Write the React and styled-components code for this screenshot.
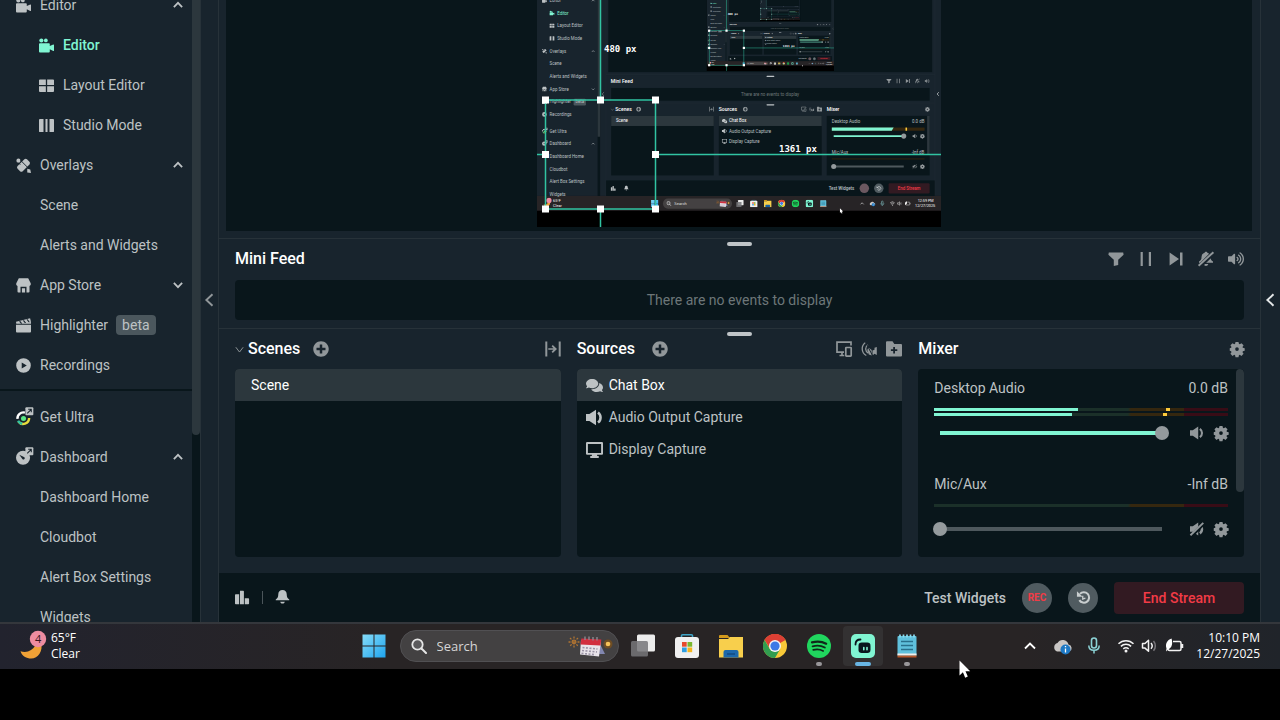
import React, { useState } from "react";
import styled, { createGlobalStyle } from "styled-components";
import { FaComments, FaPlusCircle, FaVolumeUp } from "react-icons/fa";

const colors = {
  section: "#18242d",
  dark: "#09161b",
  border: "#273239",
  selected: "#2c373d",
  text: "#bdc2c4",
  title: "#ffffff",
  icon: "#91979a",
  teal: "#80f5d2",
  red: "#f23b46",
};

const GlobalStyle = createGlobalStyle`
  * {
    box-sizing: border-box;
  }
  body {
    margin: 0;
    background: #000;
    color: ${colors.text};
    font: 14px/20px Roboto, "Liberation Sans", sans-serif;
    overflow: hidden;
  }
  button {
    font: inherit;
    color: inherit;
    background: none;
    border: 0;
    padding: 0;
  }
  svg {
    display: block;
    flex: none;
  }
  ul {
    list-style: none;
    margin: 0;
    padding: 0;
  }
`;

/* ---------- icons ---------- */

const glyphs = {
  camera: (
    <>
      <circle cx="2.500" cy="2.600" r="2.200" />
      <circle cx="7.300" cy="2.600" r="2" />
      <path d="M1 5.500h9.500a1 1 0 0 1 1 1v2L15.200 7a.6.600 0 0 1 .8.500v5.800a.6.600 0 0 1-.8.500L11.500 12v2.500a1 1 0 0 1-1 1H1a1 1 0 0 1-1-1v-8a1 1 0 0 1 1-1z" />
    </>
  ),
  grid: (
    <path d="M1 1.500h6.300v6H0v-5a1 1 0 0 1 1-1zM8.700 1.500H15a1 1 0 0 1 1 1v5H8.700zM0 8.800h7.300v6H1a1 1 0 0 1-1-1zM8.700 8.800H16v5a1 1 0 0 1-1 1H8.700z" />
  ),
  columns: (
    <path d="M1 1h3.800v14H1a1 1 0 0 1-1-1V2a1 1 0 0 1 1-1zM6.900 1h2.200v14H6.900zM11.200 1H15a1 1 0 0 1 1 1v12a1 1 0 0 1-1 1h-3.800z" />
  ),
  overlays: (
    <>
      <path d="M8.900 1.400a2 2 0 0 1 2.800 0l2.600 2.600a2 2 0 0 1 0 2.800l-7.200 7.200a2 2 0 0 1-2.800 0l-2.600-2.600a2 2 0 0 1 0-2.800z" />
      <circle cx="2.600" cy="2.800" r="2.200" />
      <path d="M5 2.600l8.500 8.500M2.500 5.100l2 2" stroke={colors.section} strokeWidth="1" />
      <path d="M12 11.400l3.200.8.800 3.800-4-.6z" />
    </>
  ),
  store: (
    <path
      fillRule="evenodd"
      d="M3 .3h10l2.700 5.200c.4 1.500-.3 2.600-1.300 2.900v6.100a1 1 0 0 1-1 1H2.600a1 1 0 0 1-1-1V8.400C.6 8.100-.1 7 .3 5.500zM4.800 15.500h1.500v-4.500h3.400v4.500h1.500V9.300H4.800z"
    />
  ),
  clapper: (
    <path
      fillRule="evenodd"
      d="M0 7.200h16v7.300a1 1 0 0 1-1 1H1a1 1 0 0 1-1-1zM0 3.900 15 .2l.8 3L16 6H.3zM3.200 3.600l2 2.200h1.400l-2-2.500zM7.200 2.600l2.200 2.800 1.400-.1-2.200-3zM11.200 1.600l2.200 3 1.300-.2-2.100-3.100z"
    />
  ),
  play: (
    <path
      fillRule="evenodd"
      d="M8 .2a7.800 7.800 0 1 1 0 15.600A7.800 7.800 0 0 1 8 .2zM6.100 4.800v6.400L11.500 8z"
    />
  ),
  ultra: (
    <>
      <g fill="none" strokeWidth="2.600">
        <path d="M1.600 9.500A6.300 6.300 0 0 1 9.500 2.800" stroke="#fff" />
        <path d="M14 8.500A6.300 6.300 0 0 1 2.600 12.200" stroke="#e6dc3c" />
        <path d="M2.200 11.400a6.300 6.300 0 0 0 4.500 3.300" stroke="#31c3a2" />
      </g>
      <circle cx="8" cy="9" r="2.700" fill="#58e684" />
      <Popout />
    </>
  ),
  dashboard: (
    <>
      <circle cx="7.500" cy="8.200" r="7.500" />
      <path d="M3.500 5l5.500 2.600a1.500 1.500 0 0 1-2 2.200z" fill={colors.section} />
      <Popout />
    </>
  ),
  filter: <path d="M.8 1.500h14.400l.4 2.200-5.400 5V14l-4.400 1V8.700l-5.400-5z" />,
  pause: <path d="M2.600 1h2.200v14H2.600zM10.800 1H13v14h-2.200z" />,
  skip: <path d="M1.600 1.500 11 8l-9.400 6.500zM12 1.500h2.500v13H12z" />,
  bellOff: (
    <>
      <path d="M8 .8c.8 0 1.300.4 1.300 1 2.100.6 3.200 2.200 3.200 4.400 0 2.200.8 3 2.500 4.300v1.300H1v-1.300c1.700-1.300 2.500-2.100 2.500-4.300 0-2.200 1.100-3.800 3.200-4.400 0-.6.500-1 1.300-1zM5.700 13h4.600c-.3 1.300-1.200 2-2.300 2s-2-.7-2.300-2z" />
      <path d="M1 16 16 1" stroke={colors.section} strokeWidth="4.400" />
      <path d="M.6 14.800 15.400 1.200" stroke="currentColor" strokeWidth="1.900" />
    </>
  ),
  gear: (
    <path
      fillRule="evenodd"
      d="M6.300 0h3.400l.5 2.100 1 .4 1.900-1.100 2.400 2.400-1.200 1.900.4 1 2.100.5v2.900l-2.100.5-.4 1 1.200 1.900-2.400 2.400-1.900-1.200-1 .4-.5 2.200H6.300l-.5-2.200-1-.4-1.900 1.200-2.400-2.400 1.200-1.900-.4-1L-.3 10V7.200l1.600-.5.4-1L.5 3.800l2.400-2.400 1.900 1.100 1-.4zM8 6a2.100 2.100 0 1 0 0 4.200A2.100 2.100 0 0 0 8 6z"
    />
  ),
  dock: (
    <path d="M.3.500h2v15h-2zM13.700.500h2v15h-2zM3.300 7.200h5.200L6.600 5.300l1.200-1.200L12 8l-4.200 4-1.200-1.200 1.900-2H3.300z" />
  ),
  devices: (
    <g fill="none" stroke="currentColor" strokeWidth="1.700">
      <path d="M15 4.500V1.200H1v10h7M3.500 14.500h4.800M6 11.500v3" />
      <rect x="9.800" y="6.500" width="5.400" height="8.600" rx=".6" />
    </g>
  ),
  broadcast: (
    <>
      <g fill="none" stroke="currentColor" strokeWidth="1.300">
        <path d="M4.500 1.500a7.600 7.600 0 0 0 .8 13M7 3.800a4.800 4.800 0 0 0 .3 8.400" />
      </g>
      <path d="M7.500 6.500l3.200 2.500v5.500L7.800 13.500 6.300 9zM11.500 9.500l2-.8V6.800L15.800 6v8l-2.300-1.200-2 1.700z" />
      <path d="M4.500 1 12 15.500" stroke={colors.section} strokeWidth="1" />
    </>
  ),
  folderPlus: (
    <path
      fillRule="evenodd"
      d="M0 1.300a1 1 0 0 1 1-1h5.500L8.300 3H15a1 1 0 0 1 1 1v10.500a1 1 0 0 1-1 1H1a1 1 0 0 1-1-1zM7.200 6v2.300H4.900v1.800h2.300v2.300H9v-2.300h2.300V8.300H9V6z"
    />
  ),
  speaker: (
    <>
      <path d="M0 4.800h3.200L9.400.6v14.800l-6.200-4.200H0z" />
      <path d="M11.300 3.200a6 6 0 0 1 0 9.600" fill="none" stroke="currentColor" strokeWidth="2.400" />
    </>
  ),
  speakerOff: (
    <>
      <path d="M0 4.800h3.200L9.400.6v14.800l-6.200-4.200H0z" />
      <path d="M11.300 4a5.500 5.500 0 0 1 0 9" fill="none" stroke="currentColor" strokeWidth="3" />
      <path d="M1 16.500 16 1.500" stroke={colors.dark} strokeWidth="4" />
      <path d="M.5 15.200 15.200 1" stroke="currentColor" strokeWidth="2.200" />
    </>
  ),
  monitor: (
    <path
      fillRule="evenodd"
      d="M1 1h14a1 1 0 0 1 1 1v10a1 1 0 0 1-1 1h-4.500v1.200h1.500V16H4v-1.800h1.500V13H1a1 1 0 0 1-1-1V2a1 1 0 0 1 1-1zM1.800 2.800v8.400h12.400V2.800z"
    />
  ),
  chart: (
    <path d="M.8 4.500h3.600V15.300H.8a.8.800 0 0 1-.8-.8V5.300a.8.800 0 0 1 .8-.8zM5.300 .7h3.400a.8.800 0 0 1 .8.800v13.800H5.300zM10.400 8.800h3.800a.8.800 0 0 1 .8.800v4.900a.8.800 0 0 1-.8.800h-3.800z" />
  ),
  bell: (
    <path d="M8 0c2.800 0 4.500 1.800 4.500 4.600 0 3 .8 4.400 2.700 5.400v1H.8v-1c1.900-1 2.700-2.400 2.700-5.400C3.500 1.800 5.200 0 8 0zM5.500 12.400h5c-.4 1.300-1.300 2.100-2.500 2.100s-2.100-.8-2.500-2.100z" />
  ),
  replay: (
    <>
      <path
        d="M4.200 4.200a5.600 5.600 0 1 1-.6 6.600"
        fill="none"
        stroke="currentColor"
        strokeWidth="2.200"
      />
      <path d="M1 1.200v6h6z" />
      <path d="M7.200 6v3.600l2.800-1" fill="none" stroke="currentColor" strokeWidth="1.400" />
    </>
  ),
  chevronUp: <path d="M2.500 10.800 8 5.200l5.500 5.600" fill="none" stroke="currentColor" strokeWidth="2.400" />,
  chevronDown: <path d="M2.500 5.200 8 10.800l5.500-5.600" fill="none" stroke="currentColor" strokeWidth="2.400" />,
  caret: <path d="M1.500 4 8 12.500 14.500 4" fill="none" stroke="currentColor" strokeWidth="1.700" />,
  chevronLeft: <path d="M12 1.500 5 8l7 6.500" fill="none" stroke="currentColor" strokeWidth="2.200" />,
};

function Popout() {
  return (
    <g>
      <rect x="10" y="-3" width="8.500" height="8.500" rx="1" fill={colors.text} />
      <path
        d="M12 3.500l4-4M13 -.8h3.300v3.300"
        fill="none"
        stroke={colors.section}
        strokeWidth="1.100"
      />
    </g>
  );
}

const Icon = ({ name, size = 16, ...rest }) => (
  <svg
    viewBox="0 0 16 16"
    width={size}
    height={size}
    fill="currentColor"
    overflow="visible"
    aria-hidden="true"
    {...rest}
  >
    {glyphs[name]}
  </svg>
);

/* ---------- shell ---------- */

const Screen = styled.div`
  height: 100vh;
  display: flex;
  flex-direction: column;
  background: #000;
  padding-bottom: 51px;
`;

const Workspace = styled.div`
  flex: 1;
  min-height: 0;
  display: flex;
  background: ${colors.section};
`;

const Sidebar = styled.nav`
  width: 201px;
  flex: none;
  display: flex;
  overflow: hidden;
  border-right: 1px solid ${colors.border};
`;

const SideScroll = styled.div`
  flex: 1;
  height: 100%;
  overflow: hidden;
`;

/* the menu is scrolled part of a row down */
const SideList = styled.ul`
  margin-top: ${({ $scrolled }) => ($scrolled ? "-15px" : "0")};
  padding-bottom: 4px;
  & + & {
    border-top: 2px solid ${colors.dark};
    padding-top: 6px;
  }
`;

const SideItem = styled.li`
  height: 40px;
  display: flex;
  align-items: center;
  gap: 8px;
  padding: 0 8px 0 ${({ $indent }) => ($indent ? "39px" : "16px")};
  color: ${({ $active }) => ($active ? colors.teal : colors.text)};
  font-weight: ${({ $active }) => ($active ? 500 : 400)};
`;

const SideLink = styled.a`
  display: flex;
  align-items: center;
  gap: 9px;
  padding-left: ${({ $bare }) => ($bare ? "1px" : "0")};
  color: inherit;
  text-decoration: none;
  white-space: nowrap;
`;

const Toggle = styled.button`
  margin-left: auto;
`;

const Beta = styled.span`
  background: #4b575d;
  border-radius: 4px;
  padding: 0 6px;
`;

const Track = styled.div`
  width: 8px;
  background: ${({ $plain }) => ($plain ? "transparent" : colors.dark)};
`;

const Thumb = styled.div`
  height: ${({ $size }) => $size};
  background: ${colors.selected};
  border-radius: ${({ $round }) => ($round ? "4px" : "0 0 4px 4px")};
`;

const Collapse = styled.button`
  width: ${({ $wide }) => ($wide ? "19px" : "17px")};
  flex: none;
  display: flex;
  align-items: center;
  justify-content: center;
  padding: 0 2px 22px 0;
  color: ${({ $wide }) => ($wide ? "#e3e6e7" : colors.icon)};
`;

const Studio = styled.main`
  flex: 1;
  min-width: 0;
  display: flex;
  flex-direction: column;
  border: 1px solid ${colors.border};
  border-width: 0 1px;
`;

const Preview = styled.div`
  flex: 1;
  min-height: 0;
  padding: 0 8px 7px 7px;
`;

const Canvas = styled.div`
  height: 100%;
  background: ${colors.dark};
  display: flex;
  align-items: flex-end;
  justify-content: center;
  overflow: hidden;
  padding-bottom: 4px;
`;

const Section = styled.section`
  border-top: 1px solid ${colors.border};
  padding: 3px 16px ${({ $bottom }) => $bottom};
`;

const Grip = styled.div`
  width: 25px;
  height: 4px;
  border-radius: 2px;
  margin: 0 auto;
  background: #bfc4c7;
`;

const Header = styled.header`
  height: 26px;
  display: flex;
  align-items: center;
  gap: ${({ $gap }) => $gap || "17px"};
`;

const Title = styled.h2`
  margin: 0;
  font-size: 16px;
  font-weight: 500;
  line-height: 20px;
  color: ${colors.title};
`;

const TitleGroup = styled.div`
  display: flex;
  align-items: center;
  gap: 4px;
`;

const Tools = styled.div`
  margin-left: auto;
  display: flex;
  align-items: center;
  gap: ${({ $gap }) => $gap || "9px"};
  color: ${colors.icon};
`;

const IconButton = styled.button`
  display: flex;
  color: ${({ $bright }) => ($bright ? colors.text : colors.icon)};
`;

const Feed = styled.p`
  margin: 8px 0 0;
  height: 40px;
  display: flex;
  align-items: center;
  justify-content: center;
  border-radius: 4px;
  background: ${colors.dark};
  color: #6d7679;
`;

const Columns = styled.div`
  display: grid;
  grid-template-columns: repeat(3, minmax(0, 1fr));
  gap: 16px;
`;

const List = styled.ul`
  margin-top: 7px;
  height: 188px;
  border-radius: 4px;
  overflow: hidden;
  background: ${colors.dark};
`;

const Row = styled.li`
  height: 32px;
  display: flex;
  align-items: center;
  gap: 6px;
  padding: 0 ${({ $pad }) => $pad || "9px"};
  color: ${({ $active }) => ($active ? "#fff" : colors.text)};
  background: ${({ $active }) => ($active ? colors.selected : "transparent")};
  svg {
    color: ${colors.text};
  }
`;

const MixerBox = styled.div`
  margin-top: 7px;
  height: 188px;
  border-radius: 4px;
  overflow: hidden;
  display: flex;
  background: ${colors.dark};
`;

const Channels = styled.div`
  flex: 1;
  min-width: 0;
  padding: 8px 8px 0 16px;
`;

const ChannelRoot = styled.div`
  height: 96px;
`;

const ChannelHead = styled.div`
  display: flex;
  justify-content: space-between;
  line-height: 22px;
`;

const Meters = styled.div`
  height: 8px;
  margin: 9px 0 8px;
  display: flex;
  flex-direction: column;
  gap: 2px;
`;

const Meter = styled.div`
  height: 3px;
  display: flex;
  background: linear-gradient(
    90deg,
    #1b3029 66%,
    #35270f 67%,
    #35270f 85%,
    #380c16 85%
  );
`;

const Level = styled.div`
  background: ${colors.teal};
`;

const Peak = styled.div`
  width: 4px;
  background: #fdcb3c;
`;

const Controls = styled.div`
  height: 18px;
  display: flex;
  align-items: center;
  gap: 10px;
  margin-left: -1px;
`;

const Volume = styled.input`
  appearance: none;
  flex: 1;
  min-width: 0;
  height: 14px;
  margin: 0 11px 0 0;
  background: linear-gradient(${({ value }) => (value > 0 ? colors.teal : "#4e585d")} 0 0)
    center / calc(100% - 14px) 4px no-repeat;
  &::-webkit-slider-thumb {
    appearance: none;
    width: 14px;
    height: 14px;
    border-radius: 50%;
    background: #949a9d;
  }
`;

const Footer = styled.footer`
  height: 49px;
  display: flex;
  align-items: center;
  gap: 16px;
  padding: 0 16px;
  background: ${colors.dark};
`;

const FooterStart = styled.div`
  display: flex;
  align-items: center;
  gap: 12px;
  margin-right: auto;
`;

const Divider = styled.span`
  width: 1px;
  height: 13px;
  background: #4b555a;
`;

const TestWidgets = styled.button`
  font-weight: 500;
`;

const RoundButton = styled.button`
  width: 30px;
  height: 30px;
  border-radius: 50%;
  display: flex;
  align-items: center;
  justify-content: center;
  background: #505b60;
  font-size: 10px;
  font-weight: 700;
  color: ${({ $rec }) => ($rec ? colors.red : "#c9cecf")};
`;

const EndStream = styled.button`
  width: 130px;
  height: 32px;
  border-radius: 4px;
  background: #321a22;
  color: ${colors.red};
  font-weight: 500;
`;

/* ---------- desktop capture shown on the canvas ---------- */

const menu = [
  { label: "Editor", icon: "camera", toggle: "chevronUp" },
  { label: "Editor", icon: "camera", nested: true, active: true },
  { label: "Layout Editor", icon: "grid", nested: true },
  { label: "Studio Mode", icon: "columns", nested: true },
  { label: "Overlays", icon: "overlays", toggle: "chevronUp" },
  { label: "Scene", nested: true },
  { label: "Alerts and Widgets", nested: true },
  { label: "App Store", icon: "store", toggle: "chevronDown" },
  { label: "Highlighter", icon: "clapper", beta: true },
  { label: "Recordings", icon: "play" },
];

const lowerMenu = [
  { label: "Get Ultra", icon: "ultra" },
  { label: "Dashboard", icon: "dashboard", toggle: "chevronUp" },
  { label: "Dashboard Home", nested: true },
  { label: "Cloudbot", nested: true },
  { label: "Alert Box Settings", nested: true },
  { label: "Widgets", nested: true },
];

const captureRows = [
  ...menu.map((item, i) => ({ ...item, y: 5 + i * 40 })),
  ...lowerMenu.map((item, i) => ({ ...item, y: 417 + i * 40 })),
];

const sources = [
  { label: "Chat Box", icon: <FaComments size={17} />, active: true },
  { label: "Audio Output Capture", icon: <Icon name="speaker" size={17} /> },
  { label: "Display Capture", icon: <Icon name="monitor" size={17} /> },
];

const CaptureText = styled.text`
  font: ${({ $bold }) => ($bold ? 500 : 400)} ${({ $size }) => $size || 14}px Roboto, sans-serif;
  fill: ${({ $color }) => $color || colors.text};
`;

const GuideText = styled.text`
  font: 700 9px "DejaVu Sans Mono", "Liberation Mono", monospace;
  fill: #fff;
`;

const Guides = ({ labels }) => (
  <g>
    <g fill="none" stroke="#31c3a2" strokeWidth="1.500">
      <path d="M63.500 0V101M63.500 210v18M0 155.500h8M118 155.500h286" />
      <rect x="8.500" y="101" width="110" height="109" />
    </g>
    <g fill="#fff">
      {[
        [8.5, 101],
        [63.5, 101],
        [118.5, 101],
        [8.5, 155.5],
        [118.5, 155.5],
        [8.5, 210],
        [63.5, 210],
        [118.5, 210],
      ].map(([x, y]) => (
        <rect key={`${x}-${y}`} x={x - 3.5} y={y - 3.5} width="7" height="7" />
      ))}
    </g>
    {labels && (
      <>
        <GuideText x="67" y="53">480 px</GuideText>
        <GuideText x="242" y="153">1361 px</GuideText>
      </>
    )}
  </g>
);

const CaptureLabels = () => (
  <>
    {captureRows.map(({ label, icon, nested, active, beta, y }) => (
      <React.Fragment key={y}>
        <CaptureText
          x={nested && icon ? 64 : 40}
          y={y + 5}
          $color={active ? colors.teal : colors.text}
        >
          {label}
        </CaptureText>
        {beta && <CaptureText x="122" y={y + 5}>beta</CaptureText>}
      </React.Fragment>
    ))}
    <CaptureText x="234" y="265" $bold $size={16} $color="#fff">Mini Feed</CaptureText>
    <CaptureText x="248" y="354" $bold $size={16} $color="#fff">Scenes</CaptureText>
    <CaptureText x="576" y="354" $bold $size={16} $color="#fff">Sources</CaptureText>
    <CaptureText x="918" y="354" $bold $size={16} $color="#fff">Mixer</CaptureText>
    <CaptureText x="646" y="306" $color="#6d7679">There are no events to display</CaptureText>
    <CaptureText x="250" y="390" $color="#fff">Scene</CaptureText>
    <CaptureText x="608" y="390" $color="#fff">Chat Box</CaptureText>
    <CaptureText x="608" y="422">Audio Output Capture</CaptureText>
    <CaptureText x="608" y="454">Display Capture</CaptureText>
    <CaptureText x="934" y="393">Desktop Audio</CaptureText>
    <CaptureText x="1188" y="393">0.0 dB</CaptureText>
    <CaptureText x="934" y="489">Mic/Aux</CaptureText>
    <CaptureText x="1187" y="489">-Inf dB</CaptureText>
    <CaptureText x="924" y="603" $bold>Test Widgets</CaptureText>
    <CaptureText x="1143" y="603" $bold $color={colors.red}>End Stream</CaptureText>
    <CaptureText x="51" y="641" $size={12} $color="#fff">65°F</CaptureText>
    <CaptureText x="51" y="658" $size={12} $color="#fff">Clear</CaptureText>
    <CaptureText x="435" y="651" $size={13} $color="#ddd">Search</CaptureText>
    <CaptureText x="1206" y="641" $size={12} $color="#fff">12:59 PM</CaptureText>
    <CaptureText x="1198" y="658" $size={12} $color="#fff">12/27/2025</CaptureText>
  </>
);

const DesktopCapture = ({ depth }) => (
  <>
    <rect width="1280" height="720" fill="#000" />
    <rect width="1280" height="622" fill={colors.section} />
    <rect x="192" width="8" height="622" fill={colors.dark} />
    <rect x="192" width="8" height="435" fill={colors.selected} />
    <rect x="226" width="1026" height="231" fill={colors.dark} />
    <path d="M218.500 0v622M1260.500 0v622M219 238.500h1041M219 328.500h1041" stroke={colors.border} />
    {captureRows.map(({ icon, nested, active, toggle, beta, y }) => (
      <g key={y} color={active ? colors.teal : colors.text}>
        {icon && <Icon name={icon} x={nested ? 40 : 16} y={y - 8} size={15} />}
        {beta && <rect x="116" y={y - 10} width="39" height="21" rx="4" fill="#4b575d" />}
        {toggle && <Icon name={toggle} x={172} y={y - 6} size={12} />}
      </g>
    ))}
    <rect y="622" width="1280" height="47" fill="#272426" />
    <rect y="669" width="1280" height="51" fill="#000" />
    <g fill={colors.dark}>
      <rect x="235" y="281" width="1009" height="40" />
      <rect x="235" y="369" width="325" height="188" />
      <rect x="576" y="369" width="326" height="188" />
      <rect x="918" y="369" width="326" height="188" />
      <rect x="219" y="573" width="1041" height="49" />
    </g>
    <g fill="#bfc4c7">
      <rect x="727" y="242" width="25" height="4" rx="2" />
      <rect x="727" y="332" width="25" height="4" rx="2" />
    </g>
    <g fill={colors.selected}>
      <rect x="235" y="369" width="325" height="32" />
      <rect x="576" y="369" width="326" height="32" />
      <rect x="1236" y="369" width="8" height="123" />
    </g>
    <g color={colors.icon}>
      <Icon name="filter" x={1107} y={251} />
      <Icon name="pause" x={1137} y={251} />
      <Icon name="skip" x={1167} y={251} />
      <Icon name="bellOff" x={1197} y={251} />
      <FaVolumeUp x={1228} y={251} size={16} />
      <Icon name="caret" x={234} y={344} size={10} />
      <FaPlusCircle x={314} y={340} size={16} />
      <FaPlusCircle x={652} y={340} size={16} />
      <Icon name="dock" x={545} y={340} />
      <Icon name="devices" x={837} y={340} />
      <Icon name="broadcast" x={862} y={340} />
      <Icon name="folderPlus" x={887} y={340} />
      <Icon name="gear" x={1230} y={341} size={14} />
      <Icon name="speaker" x={1190} y={426} size={14} />
      <Icon name="gear" x={1214} y={426} size={14} />
      <Icon name="speakerOff" x={1190} y={522} size={14} />
      <Icon name="gear" x={1214} y={522} size={14} />
      <Icon name="chevronLeft" x={202} y={293} size={14} />
      <Icon name="chevronLeft" x={1263} y={293} size={14} color="#e3e6e7" />
    </g>
    <g color={colors.text}>
      <FaComments x={586} y={377} size={17} />
      <Icon name="speaker" x={586} y={409} />
      <Icon name="monitor" x={586} y={441} />
      <Icon name="chart" x={234} y={590} />
      <Icon name="bell" x={275} y={590} />
    </g>
    <rect x="934" y="406" width="294" height="10" fill="#35270f" />
    <path d="M934 406h196l-6 10H934z" fill={colors.teal} />
    <path d="M1170 406v10" stroke="#fdcb3c" strokeWidth="5" />
    <path d="M940 433h222" stroke={colors.teal} strokeWidth="6" />
    <path d="M940 529h222" stroke="#4e585d" strokeWidth="6" />
    <path d="M934 505h294" stroke="#35270f" strokeWidth="3" />
    <circle cx="1162" cy="433" r="8" fill="#949a9d" />
    <circle cx="940" cy="529" r="8" fill="#949a9d" />
    <circle cx="1037" cy="598" r="15" fill="#6b5860" />
    <circle cx="1083" cy="598" r="15" fill="#505b60" />
    <Icon name="replay" x={1075} y={590} color="#c9cecf" />
    <rect x="1114" y="582" width="130" height="32" rx="4" fill="#321a22" />
    <Moon x={20} y={627} />
    <WindowsLogo x={361} y={634} />
    <rect x="399" y="630" width="219" height="32" rx="16" fill="#444142" />
    <Magnifier x={410} y={638} />
    <SearchArt x={567} y={634} />
    {taskApps.map(({ name, Art }, i) => (
      <Art key={name} x={631 + i * 44} y={634} />
    ))}
    <Tray x={1022} y={634} />
    <Pointer x={959} y={660} />
    {depth > 0 && (
      <>
        <CaptureLabels />
        <svg x="537" y="-1" width="404" height="228" viewBox="0 0 404 228">
          <CaptureFrame depth={depth - 1} />
        </svg>
      </>
    )}
  </>
);

const CaptureFrame = ({ depth }) => (
  <>
    <svg width="404" height="228" viewBox="0 0 1280 720" preserveAspectRatio="none">
      <DesktopCapture depth={depth} />
    </svg>
    <Guides labels={depth > 0} />
  </>
);

/* ---------- taskbar drawings ---------- */

const Moon = ({ count, ...rest }) => (
  <svg width="28" height="32" viewBox="0 0 28 32" {...rest}>
    <path
      d="M21 12c2.500 9-3 16.500-9.800 16.500C6.500 28.500 2 26 .5 21.200c3.800 1.200 7.500.8 10.500-1.200 3.500-2.300 5-5 5.200-9z"
      fill="#f0a136"
    />
    <circle cx="18" cy="9" r="8.200" fill="#ee8ca0" />
    {count && (
      <text x="15" y="13" fontSize="11" fontFamily="Open Sans, sans-serif" fill="#3c1520">
        {count}
      </text>
    )}
  </svg>
);

const WindowsLogo = (props) => (
  <svg width="24" height="24" viewBox="0 0 24 24" {...props}>
    <linearGradient id="win" x1="0" y1="0" x2="1" y2="1">
      <stop offset="0" stopColor="#86dcf8" />
      <stop offset="1" stopColor="#1ea4ee" />
    </linearGradient>
    <path d="M.5.500h11v11h-11zM12.500.500h11v11h-11zM.5 12.500h11v11h-11zM12.500 12.500h11v11h-11z" fill="url(#win)" />
  </svg>
);

const Magnifier = (props) => (
  <svg width="16" height="16" viewBox="0 0 16 16" {...props}>
    <circle cx="6.500" cy="6.500" r="5.200" fill="#5b5a5c" stroke="#e6e6e6" strokeWidth="1.800" />
    <path d="M10.500 10.500l4.500 4.500" stroke="#e6e6e6" strokeWidth="2" strokeLinecap="round" />
  </svg>
);

const SearchArt = (props) => (
  <svg width="46" height="24" viewBox="0 0 46 24" {...props}>
    <path
      d="M6 2.500v11M.5 8h11M2 4l8 8M10 4l-8 8"
      stroke="#b07432"
      strokeWidth="1.300"
      strokeDasharray="2 1"
    />
    <path d="M32 10l5 10h-6z" fill="#8287b0" />
    <path d="M13 6l20 1-2 15.500-19-2z" fill="#e9e4ea" />
    <path d="M13.300 4.500l20 1-.8 6-20-1z" fill="#d22f3f" />
    <path d="M17 2.500v3.500M21 2.500v3.500M25 3v3.500M29 3v3.500" stroke="#8d8790" strokeWidth="1.400" />
    <path d="M14.500 13.500l15 1.500M14 16.500l15 1.500M13.500 19.300l14 1.500" stroke="#9b94a6" strokeWidth="1.600" strokeDasharray="2 1.500" />
    <circle cx="40" cy="10" r="4.500" fill="#6f4d23" />
    <circle cx="40" cy="10" r="2.300" fill="#f7c35a" />
  </svg>
);

const TaskView = (props) => (
  <svg width="24" height="24" viewBox="0 0 24 24" {...props}>
    <rect x="6" y="0.500" width="18" height="17" rx="1.500" fill="#ececec" />
    <rect y="7" width="17" height="15.500" rx="1.500" fill="#77777a" opacity=".85" />
  </svg>
);

const Store = (props) => (
  <svg width="24" height="24" viewBox="0 0 24 24" {...props}>
    <path d="M6.500 4V1.800a1 1 0 0 1 1-1h9a1 1 0 0 1 1 1V4" fill="none" stroke="#3fa4c6" strokeWidth="1.600" />
    <rect y="3" width="24" height="21" rx="3" fill="#f0f0f0" />
    <path d="M7 8h4.700v4.700H7z" fill="#e6492d" />
    <path d="M12.500 8h4.700v4.700h-4.700z" fill="#7ab72e" />
    <path d="M7 13.500h4.700v4.700H7z" fill="#2f9ee2" />
    <path d="M12.500 13.500h4.700v4.700h-4.700z" fill="#f5b51c" />
  </svg>
);

const Explorer = (props) => (
  <svg width="24" height="24" viewBox="0 0 24 24" {...props}>
    <path d="M0 2a1 1 0 0 1 1-1h7.500l2.500 3H0z" fill="#d39a1c" />
    <path d="M0 5h9l2-2h13a.8.800 0 0 1 .8.800V23.500H0z" fill="#f8cf4c" />
    <path d="M4.500 23.500V18a2 2 0 0 1 2-2h11a2 2 0 0 1 2 2v5.500z" fill="#1d68ab" />
    <path d="M8 20h8" stroke="#124a80" strokeWidth="1.500" />
  </svg>
);

const Chrome = (props) => (
  <svg width="24" height="24" viewBox="0 0 24 24" {...props}>
    <circle cx="12" cy="12" r="12" fill="#f9c938" />
    <path d="M12 12 1.600 6A12 12 0 0 1 22.400 6z" fill="#dc3f34" />
    <path d="M12 6h10.400a12 12 0 0 0-20.800 0l5 8z" fill="#dc3f34" />
    <path d="M1.600 6A12 12 0 0 0 12 24l5.200-9-5.200 3-5.200-3z" fill="#319d50" />
    <circle cx="12" cy="12" r="6" fill="#f4f6f8" />
    <circle cx="12" cy="12" r="4.600" fill="#3c79e6" />
  </svg>
);

const Spotify = (props) => (
  <svg width="24" height="24" viewBox="0 0 24 24" {...props}>
    <circle cx="12" cy="12" r="12" fill="#20d65e" />
    <g fill="none" stroke="#10271a" strokeLinecap="round">
      <path d="M5 8.400c5-1.400 10-1 14.200 1.300" strokeWidth="2.200" />
      <path d="M5.600 12.300c4.300-1.200 8.600-.8 12.200 1.200" strokeWidth="1.900" />
      <path d="M6.200 15.900c3.600-.9 7-.6 10 1.100" strokeWidth="1.600" />
    </g>
  </svg>
);

const Streamlabs = (props) => (
  <svg width="24" height="24" viewBox="0 0 24 24" {...props}>
    <rect width="24" height="24" rx="5" fill="#80f5d2" />
    <path d="M4.500 10.500c0-3.300 1.700-5 5-5" fill="none" stroke="#09161d" strokeWidth="1.800" strokeLinecap="round" />
    <rect x="7.500" y="8.500" width="12" height="10.500" rx="3.200" fill="#09161d" />
    <path d="M12.800 13.500v2.200M16 13.500v2.200" stroke="#80f5d2" strokeWidth="1.600" strokeLinecap="round" />
  </svg>
);

const Notepad = (props) => (
  <svg width="24" height="24" viewBox="0 0 24 24" {...props}>
    <rect x="2.500" y="2" width="19" height="20" rx="1" fill="#5fc0dc" />
    <rect x="2.500" y="19.500" width="19" height="2" fill="#f2eee9" />
    <rect x="2.500" y="21.500" width="19" height="2" fill="#b5562a" />
    <path d="M5 .5v3M8.500.500v3M12 .5v3M15.500.500v3M19 .5v3" stroke="#8bdcf0" strokeWidth="1.700" />
    <path d="M6 7.500h12M6 11.500h12M6 15.500h12" stroke="#28708c" strokeWidth="1.500" />
  </svg>
);

const Tray = (props) => (
  <svg width="162" height="24" viewBox="0 0 162 24" fill="none" {...props}>
    <path d="M3 14.500 8 9.500l5 5" stroke="#fff" strokeWidth="1.800" />
    <path d="M35 17.500a4.500 4.500 0 0 1 .5-8.500 6 6 0 0 1 11 1.500 3.700 3.700 0 0 1 1 7z" fill="#c9c6c4" />
    <circle cx="43.500" cy="15.500" r="5" fill="#1d78c4" />
    <path d="M43.500 14.500v4M43.500 12v1.300" stroke="#fff" strokeWidth="1.300" />
    <rect x="69.500" y="4" width="5" height="10" rx="2.500" stroke="#8cd3d6" strokeWidth="1.600" />
    <path d="M66.800 11.500c0 3 2 4.800 5.200 4.800s5.200-1.800 5.200-4.800M72 16.500v3" stroke="#8cd3d6" strokeWidth="1.500" />
    <g stroke="#f2f2f2" strokeWidth="1.500">
      <path d="M96.500 9.800a10.500 10.500 0 0 1 15 0M98.900 12.400a7.200 7.200 0 0 1 10.200 0M101.300 14.900a4 4 0 0 1 5.400 0" />
      <path d="M120.500 9.500h2.500l3.500-3.200v11l-3.500-3.200h-2.500zM129 9a4.500 4.500 0 0 1 0 5.800" strokeLinejoin="round" />
      <path d="M131.500 7a7.500 7.500 0 0 1 0 9.800" stroke="#77757a" />
      <path d="M151 7.500h6.500a1.500 1.500 0 0 1 1.500 1.500v6a1.500 1.500 0 0 1-1.500 1.500h-10a1.500 1.500 0 0 1-1.500-1.500M160.500 10v4" />
    </g>
    <circle cx="104" cy="17" r="1.500" fill="#f2f2f2" />
    <path d="M144.500 14.500c-1.500-4.500.5-8.500 5-10 1.500 5 .5 9.500-3.500 11l-2 2z" fill="#fff" />
  </svg>
);

const Pointer = (props) => (
  <svg width="12" height="19" viewBox="0 0 12 19" {...props}>
    <path d="M.5.500v15l3.400-3.200 2.300 5.400 2.600-1.100-2.300-5.300h4.700z" fill="#fff" />
  </svg>
);

const taskApps = [
  { name: "Task View", Art: TaskView },
  { name: "Microsoft Store", Art: Store },
  { name: "File Explorer", Art: Explorer },
  { name: "Google Chrome", Art: Chrome },
  { name: "Spotify", Art: Spotify, running: true },
  { name: "Streamlabs Desktop", Art: Streamlabs, running: true, focused: true },
  { name: "Notepad", Art: Notepad, running: true },
];

const Taskbar = styled.div`
  height: 47px;
  flex: none;
  display: grid;
  grid-template-columns: 1fr auto 1fr;
  align-items: center;
  border-top: 2px solid #34373c;
  padding-bottom: 1px;
  background: linear-gradient(90deg, #22232e, #282425 30%, #282425 80%, #20242a);
  color: #fff;
  font: 12px/16px "Open Sans", "Noto Sans", sans-serif;
`;

const Weather = styled.button`
  display: flex;
  align-items: center;
  gap: 3px;
  padding-left: 20px;
  text-align: left;
  justify-self: start;
`;

const Apps = styled.div`
  display: flex;
  align-items: center;
`;

const AppButton = styled.button`
  position: relative;
  width: 44px;
  height: 40px;
  display: flex;
  align-items: center;
  justify-content: center;
`;

const AppTile = styled.span`
  width: 40px;
  height: 40px;
  display: flex;
  align-items: center;
  justify-content: center;
  border-radius: 4px;
  background: ${({ $focused }) => ($focused ? "#333132" : "transparent")};
`;

const Running = styled.span`
  position: absolute;
  bottom: 0;
  width: ${({ $focused }) => ($focused ? "16px" : "6px")};
  height: 4px;
  border-radius: 2px;
  background: ${({ $focused }) => ($focused ? "#69b5e4" : "#99979a")};
`;

const SearchBox = styled.label`
  width: 219px;
  height: 32px;
  margin: 0 2px 0 4px;
  display: flex;
  align-items: center;
  gap: 10px;
  padding: 0 4px 0 10px;
  border: 1px solid #515053;
  border-radius: 16px;
  background: #434142;
`;

const SearchInput = styled.input`
  flex: 1;
  min-width: 0;
  border: 0;
  padding: 0;
  outline: 0;
  background: none;
  color: #fff;
  font: 13px/20px "Open Sans", "Noto Sans", sans-serif;
  &::placeholder {
    color: #d6d5d6;
  }
`;

const Status = styled.div`
  justify-self: end;
  display: flex;
  align-items: center;
  gap: 12px;
  padding-right: 20px;
  text-align: right;
`;

const Cursor = styled.div`
  position: absolute;
  left: 75%;
  bottom: 41px;
  margin-left: -1px;
`;

/* ---------- components ---------- */

const MenuItem = ({ label, icon, nested, active, toggle, beta }) => (
  <SideItem $indent={nested} $active={active}>
    <SideLink href="#" $bare={!icon}>
      {icon && <Icon name={icon} size={15} />}
      {label}
    </SideLink>
    {beta && <Beta>beta</Beta>}
    {toggle && (
      <Toggle aria-label={`Toggle ${label}`}>
        <Icon name={toggle} size={12} />
      </Toggle>
    )}
  </SideItem>
);

const Channel = ({ name, db, initial, meters, muted }) => {
  const [value, setValue] = useState(initial);

  return (
    <ChannelRoot>
      <ChannelHead>
        <span>{name}</span>
        <span>{db}</span>
      </ChannelHead>
      <Meters>
        {meters.map(({ level, gap }, i) => (
          <Meter key={i}>
            <Level style={{ width: `${level}%` }} />
            {level > 0 && <Peak style={{ marginLeft: `${gap}%` }} />}
          </Meter>
        ))}
      </Meters>
      <Controls>
        <Volume
          type="range"
          aria-label={`${name} volume`}
          value={value}
          onChange={(e) => setValue(Number(e.target.value))}
        />
        <IconButton aria-label="Mute">
          <Icon name={muted ? "speakerOff" : "speaker"} size={14} />
        </IconButton>
        <IconButton aria-label={`${name} settings`}>
          <Icon name="gear" size={14} />
        </IconButton>
      </Controls>
    </ChannelRoot>
  );
};

export default function App() {
  return (
    <Screen>
      <GlobalStyle />
      <Workspace>
        <Sidebar>
          <SideScroll>
            <SideList $scrolled>
              {menu.map((item, i) => (
                <MenuItem key={i} {...item} />
              ))}
            </SideList>
            <SideList>
              {lowerMenu.map((item) => (
                <MenuItem key={item.label} {...item} />
              ))}
            </SideList>
          </SideScroll>
          <Track>
            <Thumb $size="70%" />
          </Track>
        </Sidebar>
        <Collapse aria-label="Collapse menu">
          <Icon name="chevronLeft" size={14} />
        </Collapse>

        <Studio>
          <Preview>
            <Canvas>
              <svg width="404" height="228" viewBox="0 0 404 228" aria-hidden="true">
                <CaptureFrame depth={2} />
              </svg>
            </Canvas>
          </Preview>

          <Section $bottom="8px">
            <Grip />
            <Header>
              <Title>Mini Feed</Title>
              <Tools $gap="14px">
                <IconButton aria-label="Filter"><Icon name="filter" /></IconButton>
                <IconButton aria-label="Pause"><Icon name="pause" /></IconButton>
                <IconButton aria-label="Skip"><Icon name="skip" /></IconButton>
                <IconButton aria-label="Mute alerts"><Icon name="bellOff" /></IconButton>
                <IconButton aria-label="Sound"><FaVolumeUp size={16} /></IconButton>
              </Tools>
            </Header>
            <Feed>There are no events to display</Feed>
          </Section>

          <Section $bottom="16px">
            <Grip />
            <Columns>
              <div>
                <Header $gap="13px">
                  <TitleGroup>
                    <IconButton aria-label="Scene collections">
                      <Icon name="caret" size={9} />
                    </IconButton>
                    <Title>Scenes</Title>
                  </TitleGroup>
                  <IconButton aria-label="Add scene"><FaPlusCircle size={16} /></IconButton>
                  <Tools>
                    <IconButton aria-label="Scene transitions"><Icon name="dock" /></IconButton>
                  </Tools>
                </Header>
                <List>
                  <Row $active $pad="16px">Scene</Row>
                </List>
              </div>
              <div>
                <Header>
                  <Title>Sources</Title>
                  <IconButton aria-label="Add source"><FaPlusCircle size={16} /></IconButton>
                  <Tools>
                    <IconButton aria-label="Dual output"><Icon name="devices" /></IconButton>
                    <IconButton aria-label="Selective recording"><Icon name="broadcast" /></IconButton>
                    <IconButton aria-label="Add folder"><Icon name="folderPlus" /></IconButton>
                  </Tools>
                </Header>
                <List>
                  {sources.map(({ label, icon, active }) => (
                    <Row key={label} $active={active}>
                      {icon}
                      {label}
                    </Row>
                  ))}
                </List>
              </div>
              <div>
                <Header>
                  <Title>Mixer</Title>
                  <Tools>
                    <IconButton aria-label="Mixer settings"><Icon name="gear" size={14} /></IconButton>
                  </Tools>
                </Header>
                <MixerBox>
                  <Channels>
                    <Channel
                      name="Desktop Audio"
                      db="0.0 dB"
                      initial={100}
                      meters={[
                        { level: 49, gap: 30 },
                        { level: 47, gap: 31 },
                      ]}
                    />
                    <Channel name="Mic/Aux" db="-Inf dB" initial={0} meters={[{ level: 0 }]} muted />
                  </Channels>
                  <Track $plain>
                    <Thumb $size="123px" $round />
                  </Track>
                </MixerBox>
              </div>
            </Columns>
          </Section>

          <Footer>
            <FooterStart>
              <IconButton $bright aria-label="Performance"><Icon name="chart" size={15} /></IconButton>
              <Divider />
              <IconButton $bright aria-label="Notifications"><Icon name="bell" size={15} /></IconButton>
            </FooterStart>
            <TestWidgets>Test Widgets</TestWidgets>
            <RoundButton $rec>REC</RoundButton>
            <RoundButton aria-label="Replay buffer"><Icon name="replay" size={15} /></RoundButton>
            <EndStream>End Stream</EndStream>
          </Footer>
        </Studio>

        <Collapse $wide aria-label="Open live dock">
          <Icon name="chevronLeft" size={14} />
        </Collapse>
      </Workspace>

      <Taskbar>
        <Weather>
          <Moon count="4" />
          <span>
            65°F
            <br />
            Clear
          </span>
        </Weather>
        <Apps>
          <AppButton aria-label="Start"><WindowsLogo /></AppButton>
          <SearchBox>
            <Magnifier />
            <SearchInput placeholder="Search" aria-label="Search" />
            <SearchArt />
          </SearchBox>
          {taskApps.map(({ name, Art, running, focused }) => (
            <AppButton key={name} aria-label={name}>
              <AppTile $focused={focused}>
                <Art />
              </AppTile>
              {running && <Running $focused={focused} />}
            </AppButton>
          ))}
        </Apps>
        <Status>
          <Tray />
          <span>
            10:10 PM
            <br />
            12/27/2025
          </span>
        </Status>
      </Taskbar>
      <Cursor>
        <Pointer />
      </Cursor>
    </Screen>
  );
}
